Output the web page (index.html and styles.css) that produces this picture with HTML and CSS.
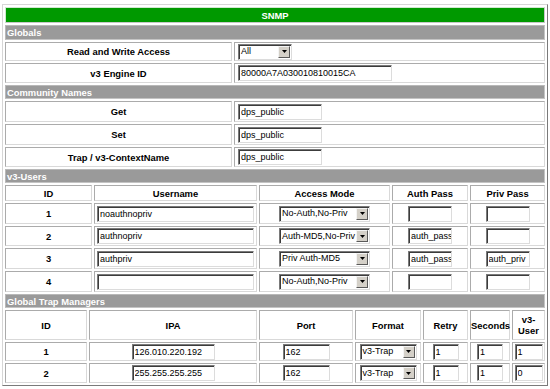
FILE: index.html
```html
<!DOCTYPE html>
<html>
<head>
<meta charset="utf-8">
<title>SNMP</title>
<link rel="stylesheet" href="styles.css">
</head>
<body>
<div class="frame">
  <table class="sec">
    <colgroup><col class="c-lbl"><col></colgroup>
    <tr class="h-title"><td colspan="2" class="title">SNMP</td></tr>
    <tr class="h-bar"><td colspan="2" class="bar">Globals</td></tr>
    <tr class="h-19"><td class="lbl">Read and Write Access</td><td class="val"><span class="dd w-rw"><span class="dd-t">All</span><span class="dd-b"><svg width="5" height="3" viewBox="0 0 5 3"><polygon points="0,0 5,0 2.5,3" fill="#000"/></svg></span></span></td></tr>
    <tr class="h-20"><td class="lbl">v3 Engine ID</td><td class="val"><input class="tx w-eng" type="text" value="80000A7A030010810015CA"></td></tr>
    <tr class="h-bar2"><td colspan="2" class="bar">Community Names</td></tr>
    <tr class="h-21"><td class="lbl">Get</td><td class="val"><input class="tx w-com" type="text" value="dps_public"></td></tr>
    <tr class="h-21"><td class="lbl">Set</td><td class="val"><input class="tx w-com" type="text" value="dps_public"></td></tr>
    <tr class="h-20"><td class="lbl">Trap / v3-ContextName</td><td class="val"><input class="tx w-com" type="text" value="dps_public"></td></tr>
  </table>

  <table class="sec">
    <colgroup><col class="u-id"><col class="u-name"><col class="u-mode"><col class="u-auth"><col></colgroup>
    <tr class="h-bar2"><td colspan="5" class="bar">v3-Users</td></tr>
    <tr class="h-16"><td class="hd">ID</td><td class="hd">Username</td><td class="hd">Access Mode</td><td class="hd">Auth Pass</td><td class="hd">Priv Pass</td></tr>
    <tr class="h-21">
      <td class="hd">1</td>
      <td class="c"><input class="tx w-user" type="text" value="noauthnopriv"></td>
      <td class="c"><span class="dd w-mode"><span class="dd-t">No-Auth,No-Priv</span><span class="dd-b"><svg width="5" height="3" viewBox="0 0 5 3"><polygon points="0,0 5,0 2.5,3" fill="#000"/></svg></span></span></td>
      <td class="c"><input class="tx w-pass" type="text" value=""></td>
      <td class="c"><input class="tx w-pass" type="text" value=""></td>
    </tr>
    <tr class="h-20">
      <td class="hd">2</td>
      <td class="c"><input class="tx w-user" type="text" value="authnopriv"></td>
      <td class="c"><span class="dd w-mode"><span class="dd-t">Auth-MD5,No-Priv</span><span class="dd-b"><svg width="5" height="3" viewBox="0 0 5 3"><polygon points="0,0 5,0 2.5,3" fill="#000"/></svg></span></span></td>
      <td class="c"><input class="tx w-pass" type="text" value="auth_pass"></td>
      <td class="c"><input class="tx w-pass" type="text" value=""></td>
    </tr>
    <tr class="h-21">
      <td class="hd">3</td>
      <td class="c"><input class="tx w-user" type="text" value="authpriv"></td>
      <td class="c"><span class="dd w-mode"><span class="dd-t">Priv Auth-MD5</span><span class="dd-b"><svg width="5" height="3" viewBox="0 0 5 3"><polygon points="0,0 5,0 2.5,3" fill="#000"/></svg></span></span></td>
      <td class="c"><input class="tx w-pass" type="text" value="auth_pass"></td>
      <td class="c"><input class="tx w-pass" type="text" value="auth_priv"></td>
    </tr>
    <tr class="h-21">
      <td class="hd">4</td>
      <td class="c"><input class="tx w-user" type="text" value=""></td>
      <td class="c"><span class="dd w-mode"><span class="dd-t">No-Auth,No-Priv</span><span class="dd-b"><svg width="5" height="3" viewBox="0 0 5 3"><polygon points="0,0 5,0 2.5,3" fill="#000"/></svg></span></span></td>
      <td class="c"><input class="tx w-pass" type="text" value=""></td>
      <td class="c"><input class="tx w-pass" type="text" value=""></td>
    </tr>
  </table>

  <table class="sec">
    <colgroup><col class="t-id"><col class="t-ipa"><col class="t-port"><col class="t-fmt"><col class="t-retry"><col class="t-sec"><col></colgroup>
    <tr class="h-bar2"><td colspan="7" class="bar">Global Trap Managers</td></tr>
    <tr class="h-30"><td class="hd">ID</td><td class="hd">IPA</td><td class="hd">Port</td><td class="hd">Format</td><td class="hd">Retry</td><td class="hd">Seconds</td><td class="hd">v3-<br>User</td></tr>
    <tr class="h-19">
      <td class="hd">1</td>
      <td class="c"><input class="tx w-ipa" type="text" value="126.010.220.192"></td>
      <td class="c"><input class="tx w-port" type="text" value="162"></td>
      <td class="c"><span class="dd w-fmt"><span class="dd-t">v3-Trap</span><span class="dd-b"><svg width="5" height="3" viewBox="0 0 5 3"><polygon points="0,0 5,0 2.5,3" fill="#000"/></svg></span></span></td>
      <td class="c"><input class="tx w-num" type="text" value="1"></td>
      <td class="c"><input class="tx w-num" type="text" value="1"></td>
      <td class="c"><input class="tx w-v3" type="text" value="1"></td>
    </tr>
    <tr class="h-20">
      <td class="hd">2</td>
      <td class="c"><input class="tx w-ipa" type="text" value="255.255.255.255"></td>
      <td class="c"><input class="tx w-port" type="text" value="162"></td>
      <td class="c"><span class="dd w-fmt"><span class="dd-t">v3-Trap</span><span class="dd-b"><svg width="5" height="3" viewBox="0 0 5 3"><polygon points="0,0 5,0 2.5,3" fill="#000"/></svg></span></span></td>
      <td class="c"><input class="tx w-num" type="text" value="1"></td>
      <td class="c"><input class="tx w-num" type="text" value="1"></td>
      <td class="c"><input class="tx w-v3" type="text" value="0"></td>
    </tr>
  </table>
</div>
</body>
</html>
```

FILE: styles.css
```css
html, body {
  background: #ffffff;
}
body {
  margin: 0;
  padding: 4px 0 0 2px;
  font-family: "Liberation Sans", Arial, sans-serif;
  font-size: 9.4px;
  color: #000;
}
.frame {
  width: 546px;
  box-sizing: border-box;
  border: 1px solid;
  border-color: #d6d6d6 #7a7a7a #7a7a7a #d6d6d6;
}
table.sec {
  width: 100%;
  table-layout: fixed;
  border-collapse: separate;
  border-spacing: 2px;
}
table.sec + table.sec {
  margin-top: -2px;
}
td {
  box-sizing: border-box;
  padding: 0;
  border: 1px solid;
  border-color: #ababab #d9d9d9 #d9d9d9 #ababab;
  vertical-align: middle;
  line-height: 11px;
  white-space: nowrap;
}

/* column widths */
.c-lbl { width: 227px; }
.u-id { width: 87px; }
.u-name { width: 163px; }
.u-mode { width: 131px; }
.u-auth { width: 76px; }
.t-id { width: 82px; }
.t-ipa { width: 168px; }
.t-port { width: 94px; }
.t-fmt { width: 66px; }
.t-retry { width: 45px; }
.t-sec { width: 40px; }

/* row heights */
.h-title td { height: 16px; }
.h-bar td { height: 15px; }
.h-bar2 td { height: 14px; }
.h-16 td { height: 16px; }
.h-19 td { height: 19px; }
.h-20 td { height: 20px; }
.h-21 td { height: 21px; }
.h-30 td { height: 30px; }

.title {
  background: #009900;
  color: #fff;
  font-weight: bold;
  text-align: center;
  border-color: #d0e8d0 #c8c8c8 #c8c8c8 #d0e8d0;
}
.bar {
  background: #9a9a9a;
  color: #fff;
  font-weight: bold;
  text-align: left;
  padding-left: 1px;
  border-color: #b8b8b8 #c4c4c4 #c4c4c4 #b8b8b8;
}
.lbl {
  font-weight: bold;
  text-align: center;
}
.val {
  padding-left: 3px;
  text-align: left;
}
.hd {
  font-weight: bold;
  text-align: center;
}
.c {
  text-align: center;
}

/* text inputs */
.tx {
  box-sizing: border-box;
  height: 16px;
  margin: 0;
  padding: 0 0 0 2px;
  border: 1px solid;
  border-color: #7a7a7a #dcdcdc #dcdcdc #7a7a7a;
  box-shadow: inset 1px 1px 0 #3c3c3c;
  background: #fff;
  color: #000;
  font-family: "Liberation Sans", Arial, sans-serif;
  font-size: 9px;
  vertical-align: middle;
  outline: none;
}
.w-eng { width: 154px; }
.w-com { width: 84px; }
.w-user { width: 157px; }
.w-pass { width: 44px; }
.w-ipa { width: 83px; }
.w-port { width: 47px; }
.w-num { width: 26px; }
.w-v3 { width: 28px; }

/* dropdowns */
.dd {
  box-sizing: border-box;
  display: inline-flex;
  align-items: center;
  height: 16px;
  border: 1px solid;
  border-color: #7a7a7a #dcdcdc #dcdcdc #7a7a7a;
  box-shadow: inset 1px 1px 0 #3c3c3c;
  background: #fff;
  vertical-align: middle;
  text-align: left;
}
.dd-t {
  flex: 1;
  min-width: 0;
  overflow: hidden;
  padding-left: 2px;
  font-size: 9px;
  white-space: nowrap;
}
.dd-b {
  box-sizing: border-box;
  flex: none;
  width: 12px;
  height: 12px;
  margin-right: 1px;
  display: flex;
  align-items: center;
  justify-content: center;
  background: #d4d0c8;
  border: 1px solid;
  border-color: #f4f4f4 #5a5a5a #5a5a5a #f4f4f4;
}
.dd-b svg {
  display: block;
}
.w-rw { width: 54px; }
.w-mode { width: 91px; }
.w-fmt { width: 57px; }
```
